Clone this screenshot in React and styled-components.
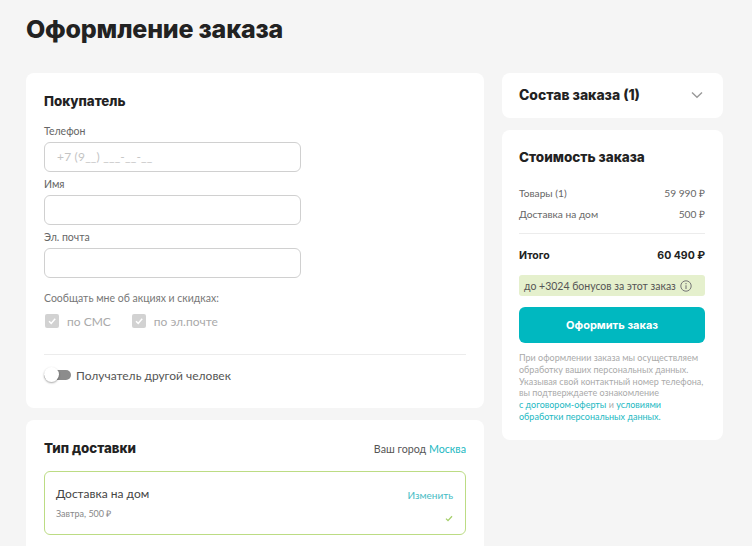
import React from "react";
import styled, { createGlobalStyle } from "styled-components";

const GlobalStyle = createGlobalStyle`
  html, body {
    margin: 0;
    padding: 0;
    background: #f5f5f5;
    height: 546px;
    overflow: hidden;
  }
  * {
    box-sizing: border-box;
  }
`;

const Page = styled.div`
  padding: 0 29px 0 26px;
  font-family: "Lato", "Liberation Sans", sans-serif;
  color: #222;
`;

const Title = styled.h1`
  margin: 0;
  padding-top: 12px;
  height: 73px;
  font-family: "Inter", sans-serif;
  font-size: 25px;
  line-height: 34px;
  font-weight: 800;
  letter-spacing: -0.2px;
  color: #222;
`;

const Columns = styled.div`
  display: grid;
  grid-template-columns: 458px 221px;
  column-gap: 18px;
  align-items: start;
`;

const Column = styled.div`
  display: flex;
  flex-direction: column;
  gap: 12px;
`;

const Card = styled.section`
  background: #fff;
  border-radius: 8px;
  padding: ${(p) => p.$padding || "18px"};
`;

const Heading = styled.h2`
  margin: 0;
  font-family: "Inter", sans-serif;
  font-size: ${(p) => p.$size || 13.3}px;
  line-height: 20px;
  font-weight: 800;
  color: #222;
`;

const FieldLabel = styled.label`
  display: block;
  font-size: 10.5px;
  line-height: 14px;
  color: #666;
  margin-bottom: 4px;
`;

const Field = styled.div`
  margin-top: ${(p) => p.$top || 5}px;
`;

const InputBox = styled.div`
  width: 257px;
  height: 30px;
  border: 1px solid #d0d0d0;
  border-radius: 6px;
  padding: 0 12px;
  font-size: 12px;
  line-height: 28px;
  color: #c4c4c4;
  letter-spacing: 0.2px;
`;

const Hint = styled.div`
  margin-top: 13px;
  font-size: 10.5px;
  line-height: 14px;
  color: #777;
`;

const CheckRow = styled.div`
  display: flex;
  align-items: center;
  margin: 9px 0 0 1px;
  height: 14px;
`;

const CheckBox = styled.span`
  width: 14px;
  height: 14px;
  border-radius: 2px;
  background: #d2d2d2;
  display: flex;
  align-items: center;
  justify-content: center;
`;

const CheckLabel = styled.span`
  margin: 0 21px 0 8px;
  font-size: 12px;
  color: #aaa;
`;

const Divider = styled.div`
  height: 1px;
  background: #ececec;
  margin: ${(p) => p.$margin};
`;

const ToggleRow = styled.div`
  display: flex;
  align-items: center;
  gap: 5px;
  height: 16px;
  font-size: 12px;
  color: #555;
`;

const Toggle = styled.span`
  position: relative;
  display: block;
  width: 27px;
  height: 10px;
  border-radius: 5px;
  background: #8c8c8c;
`;

const ToggleKnob = styled.span`
  position: absolute;
  left: 0;
  top: -3px;
  width: 15px;
  height: 15px;
  border-radius: 50%;
  background: #fff;
  box-shadow: 0 1px 2px rgba(0, 0, 0, 0.35);
`;

const HeadRow = styled.div`
  display: flex;
  align-items: center;
  justify-content: space-between;
`;

const City = styled.span`
  font-size: 10.7px;
  color: #555;
`;

const TealLink = styled.a`
  color: #22b8c2;
`;

const DeliveryBox = styled.div`
  margin-top: 13px;
  height: 64px;
  border: 1px solid #bcdc84;
  border-radius: 6px;
  padding: 13px 12px 0 11px;
  display: flex;
  justify-content: space-between;
`;

const DeliveryName = styled.div`
  font-size: 12px;
  line-height: 18px;
  color: #444;
`;

const DeliverySub = styled.div`
  margin-top: 4px;
  font-size: 9px;
  line-height: 14px;
  color: #888;
`;

const DeliverySide = styled.div`
  display: flex;
  flex-direction: column;
  align-items: flex-end;
  justify-content: space-between;
  padding: 3px 0 12px;
  font-size: 10px;
  line-height: 14px;
  color: #45bcc4;
`;

const ChevronButton = styled.span`
  display: flex;
  color: #999;
  margin-right: 2px;
`;

const Prices = styled.div`
  margin-top: 16px;
`;

const PriceRow = styled.div`
  display: flex;
  justify-content: space-between;
  height: 21px;
  font-size: 10.2px;
  line-height: 21px;
  color: #666;
`;

const TotalRow = styled.div`
  display: flex;
  justify-content: space-between;
  font-family: "Inter", sans-serif;
  font-size: 10.5px;
  line-height: 16px;
  font-weight: 700;
  color: #222;
`;

const Bonus = styled.div`
  margin-top: 11px;
  height: 21px;
  border-radius: 3px;
  background: #e5f0cd;
  padding: 0 5px;
  display: flex;
  align-items: center;
  gap: 4px;
  font-size: 10.5px;
  color: #555;
`;

const OrderButton = styled.button`
  display: block;
  width: 100%;
  height: 36px;
  margin-top: 11px;
  border: 0;
  border-radius: 6px;
  background: #00b8c0;
  color: #fff;
  font-family: "Inter", sans-serif;
  font-size: 11px;
  font-weight: 700;
`;

const Note = styled.p`
  margin: 9px 0 0;
  font-size: 9px;
  line-height: 11.8px;
  white-space: nowrap;
  color: #aaa;
`;

const Check = () => (
  <svg width="10" height="10" viewBox="0 0 10 10" fill="none">
    <path d="M2 5.2 4.2 7.4 8.2 2.8" stroke="#fff" strokeWidth="1.5" />
  </svg>
);

const App = () => {
  return (
    <Page>
      <GlobalStyle />
      <Title>Оформление заказа</Title>
      <Columns>
        <Column>
          <Card $padding="18px 18px 25px 18px">
            <Heading>Покупатель</Heading>
            <Field $top={13}>
              <FieldLabel>Телефон</FieldLabel>
              <InputBox>+7 (9__) ___-__-__</InputBox>
            </Field>
            <Field>
              <FieldLabel>Имя</FieldLabel>
              <InputBox />
            </Field>
            <Field>
              <FieldLabel>Эл. почта</FieldLabel>
              <InputBox />
            </Field>
            <Hint>Сообщать мне об акциях и скидках:</Hint>
            <CheckRow>
              <CheckBox>
                <Check />
              </CheckBox>
              <CheckLabel>по СМС</CheckLabel>
              <CheckBox>
                <Check />
              </CheckBox>
              <CheckLabel>по эл.почте</CheckLabel>
            </CheckRow>
            <Divider $margin="26px 0 12px" />
            <ToggleRow>
              <Toggle>
                <ToggleKnob />
              </Toggle>
              Получатель другой человек
            </ToggleRow>
          </Card>
          <Card>
            <HeadRow>
              <Heading>Тип доставки</Heading>
              <City>
                Ваш город <TealLink>Москва</TealLink>
              </City>
            </HeadRow>
            <DeliveryBox>
              <div>
                <DeliveryName>Доставка на дом</DeliveryName>
                <DeliverySub>Завтра, 500 ₽</DeliverySub>
              </div>
              <DeliverySide>
                Изменить
                <svg width="8" height="7" viewBox="0 0 8 7" fill="none">
                  <path d="M1 3.6 3 5.6 7 1.2" stroke="#a5cf6a" strokeWidth="1.3" />
                </svg>
              </DeliverySide>
            </DeliveryBox>
          </Card>
        </Column>
        <Column>
          <Card $padding="12px 18px 13px 17px">
            <HeadRow>
              <Heading $size={13.9}>Состав заказа (1)</Heading>
              <ChevronButton>
                <svg width="12" height="8" viewBox="0 0 12 8" fill="none">
                  <path d="M1 1.5 6 6.2 11 1.5" stroke="currentColor" strokeWidth="1.4" />
                </svg>
              </ChevronButton>
            </HeadRow>
          </Card>
          <Card $padding="17px 18px 17px 17px">
            <Heading $size={13.5}>Стоимость заказа</Heading>
            <Prices>
              <PriceRow>
                <span>Товары (1)</span>
                <span>59 990 ₽</span>
              </PriceRow>
              <PriceRow>
                <span>Доставка на дом</span>
                <span>500 ₽</span>
              </PriceRow>
            </Prices>
            <Divider $margin="8px 0 14px" />
            <TotalRow>
              <span>Итого</span>
              <span>60 490 ₽</span>
            </TotalRow>
            <Bonus>
              до +3024 бонусов за этот заказ
              <svg width="12" height="12" viewBox="0 0 12 12" fill="none" stroke="#777">
                <circle cx="6" cy="6" r="5.2" />
                <path d="M6 5.2V9M6 3V4.2" strokeWidth="1.1" />
              </svg>
            </Bonus>
            <OrderButton>Оформить заказ</OrderButton>
            <Note>
              При оформлении заказа мы осуществляем
              <br />
              обработку ваших персональных данных.
              <br />
              Указывая свой контактный номер телефона,
              <br />
              вы подтверждаете ознакомление
              <br />
              <TealLink>с договором-оферты</TealLink> и <TealLink>условиями</TealLink>
              <br />
              <TealLink>обработки персональных данных.</TealLink>
            </Note>
          </Card>
        </Column>
      </Columns>
    </Page>
  );
};

export default App;
